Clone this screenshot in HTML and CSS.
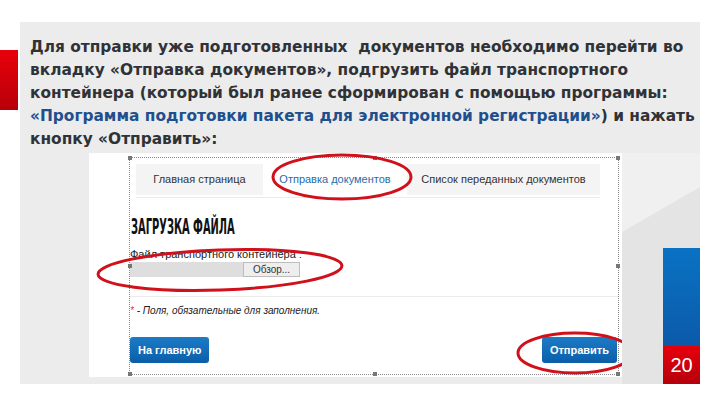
FILE: index.html
```html
<!DOCTYPE html>
<html>
<head>
<title>Отправка документов</title>
<meta charset="UTF-8">
<meta name="viewport" content="width=device-width, initial-scale=1">
<link rel="stylesheet" href="styles.css">
</head>
<body>

<div class="slide">
    <!-- красная метка слева -->
    <div class="mark"></div>

    <div class="panel">
        <p class="intro">
            Для отправки уже подготовленных&nbsp; документов необходимо перейти во<br>
            вкладку «Отправка документов», подгрузить файл транспортного<br>
            контейнера (который был ранее сформирован с помощью программы:<br>
            <span class="prog">«Программа подготовки пакета для электронной регистрации»</span>) и нажать<br>
            кнопку «Отправить»:
        </p>

        <div class="row">
            <!-- снимок экрана -->
            <div class="shot">
                <div class="frame">
                    <div class="tabs">
                        <div class="tab">Главная страница</div>
                        <div class="tab active">Отправка документов</div>
                        <div class="tab wide">Список переданных документов</div>
                    </div>

                    <h2 class="title">ЗАГРУЗКА ФАЙЛА</h2>
                    <div class="label">Файл транспортного контейнера :</div>
                    <div class="file">
                        <div class="field"></div>
                        <div class="browse">Обзор...</div>
                    </div>

                    <div class="note"><span class="star">*</span> - Поля, обязательные для заполнения.</div>

                    <div class="buttons">
                        <div class="btn">На главную</div>
                        <div class="btn">Отправить</div>
                    </div>

                    <!-- маркеры выделения -->
                    <i class="h h1"></i><i class="h h2"></i><i class="h h3"></i>
                    <i class="h h4"></i><i class="h h5"></i>
                    <i class="h h6"></i><i class="h h7"></i><i class="h h8"></i>
                </div>

                <!-- красные обводки -->
                <svg class="marks" width="533" height="224" viewBox="0 0 533 224">
                    <ellipse cx="253" cy="24" rx="69" ry="22"/>
                    <ellipse cx="131" cy="117" rx="122" ry="20" transform="rotate(-2 131 117)"/>
                    <ellipse cx="486" cy="200" rx="57" ry="20"/>
                </svg>
            </div>

            <!-- правая колонка с номером -->
            <div class="side">
                <div class="bar">
                    <div class="blue"></div>
                    <div class="num">20</div>
                </div>
            </div>
        </div>
    </div>
</div>

</body>
</html>
```

FILE: styles.css
```css
body {
    margin: 0;
    background: #fff;
    font-family: "Liberation Sans", Arial, sans-serif;
}

.slide {
    position: relative;
    width: 720px;
    height: 405px;
    overflow: hidden;
}

/* красная метка */
.mark {
    position: absolute;
    left: 0;
    top: 50px;
    width: 18px;
    height: 60px;
    background: linear-gradient(#e8000b, #b8000a);
}

/* серая панель */
.panel {
    position: absolute;
    left: 20px;
    top: 22px;
    width: 680px;
    height: 362px;
    background: #ececec;
}

.intro {
    margin: 0;
    height: 117px;
    padding: 14px 0 0 10px;
    font-family: "DejaVu Sans", Verdana, sans-serif;
    font-size: 15.4px;
    line-height: 23px;
    font-weight: bold;
    color: #2f3236;
    white-space: nowrap;
}

.intro .prog {
    color: #1f4f8c;
}

.row {
    display: flex;
}

/* снимок экрана */
.shot {
    position: relative;
    width: 533px;
    height: 224px;
    margin-left: 69px;
    background: #fff;
}

.frame {
    position: absolute;
    left: 40px;
    top: 4px;
    width: 488px;
    height: 216px;
    border: 1px dotted #8a8a8a;
    font-size: 11px;
    color: #333;
}

.tabs {
    display: flex;
    margin: 6px 18px 0 6px;
    border-bottom: 1px solid #ebebeb;
}

.tab {
    width: 127px;
    height: 31px;
    line-height: 31px;
    text-align: center;
    background: #f4f4f4;
    margin-bottom: 2px;
}

.tab.active {
    width: 144px;
    background: #fff;
    color: #2a6aa8;
}

.tab.wide {
    width: 193px;
}

.title {
    margin: 19px 0 0 1px;
    font-family: "Liberation Sans Narrow", "DejaVu Sans Condensed", sans-serif;
    font-size: 22px;
    line-height: 19px;
    color: #111;
    transform: scaleX(0.5);
    transform-origin: left;
    white-space: nowrap;
}

.label {
    margin-top: 13px;
    line-height: 11px;
    color: #222;
}

.file {
    display: flex;
    margin-top: 2px;
    height: 15px;
}

.field {
    width: 113px;
    background: #dedede;
}

.browse {
    width: 55px;
    border: 1px solid #bdbdbd;
    background: #eeeeee;
    text-align: center;
    line-height: 13px;
    font-size: 10px;
}

.note {
    margin-top: 19px;
    padding-top: 8px;
    border-top: 1px solid #ececec;
    font-size: 10px;
    font-style: italic;
    color: #222;
}

.note .star {
    color: #e33;
}

.buttons {
    display: flex;
    justify-content: space-between;
    align-items: flex-end;
    margin-top: 21px;
    padding-right: 1px;
}

.btn {
    height: 26px;
    line-height: 26px;
    padding: 0 8px;
    border-radius: 3px;
    background: linear-gradient(#1c7bc7, #0b5ea8);
    color: #fff;
    font-weight: bold;
    font-size: 11px;
}

/* маркеры рамки */
.h {
    position: absolute;
    width: 4px;
    height: 4px;
    background: #777;
}
.h1 { left: -2px; top: -2px; }
.h2 { left: 243px; top: -2px; }
.h3 { right: -2px; top: -2px; }
.h4 { left: -2px; top: 106px; }
.h5 { right: -2px; top: 106px; }
.h6 { left: -2px; bottom: -2px; }
.h7 { left: 243px; bottom: -2px; }
.h8 { right: -2px; bottom: -2px; }

.marks {
    position: absolute;
    left: 0;
    top: 0;
    overflow: visible;
}

.marks ellipse {
    fill: none;
    stroke: #d0101b;
    stroke-width: 3;
}

/* правая колонка */
.side {
    position: relative;
    width: 78px;
    height: 231px;
    background: #e4e4e4;
    display: flex;
    flex-direction: column;
    justify-content: flex-end;
}

.side::before {
    content: "";
    position: absolute;
    left: 0;
    top: 0;
    width: 100%;
    height: 80px;
    background: #f0f0f0;
    clip-path: polygon(0 0, 100% 0, 100% 34px, 0 79px);
}

.bar {
    margin-left: 41px;
    width: 37px;
}

.blue {
    height: 98px;
    background: linear-gradient(#0a72c4, #0b5aa8);
}

.num {
    height: 38px;
    background: linear-gradient(#e6000c, #b5000c);
    color: #fff;
    font-size: 20px;
    line-height: 38px;
    text-align: center;
}
```
